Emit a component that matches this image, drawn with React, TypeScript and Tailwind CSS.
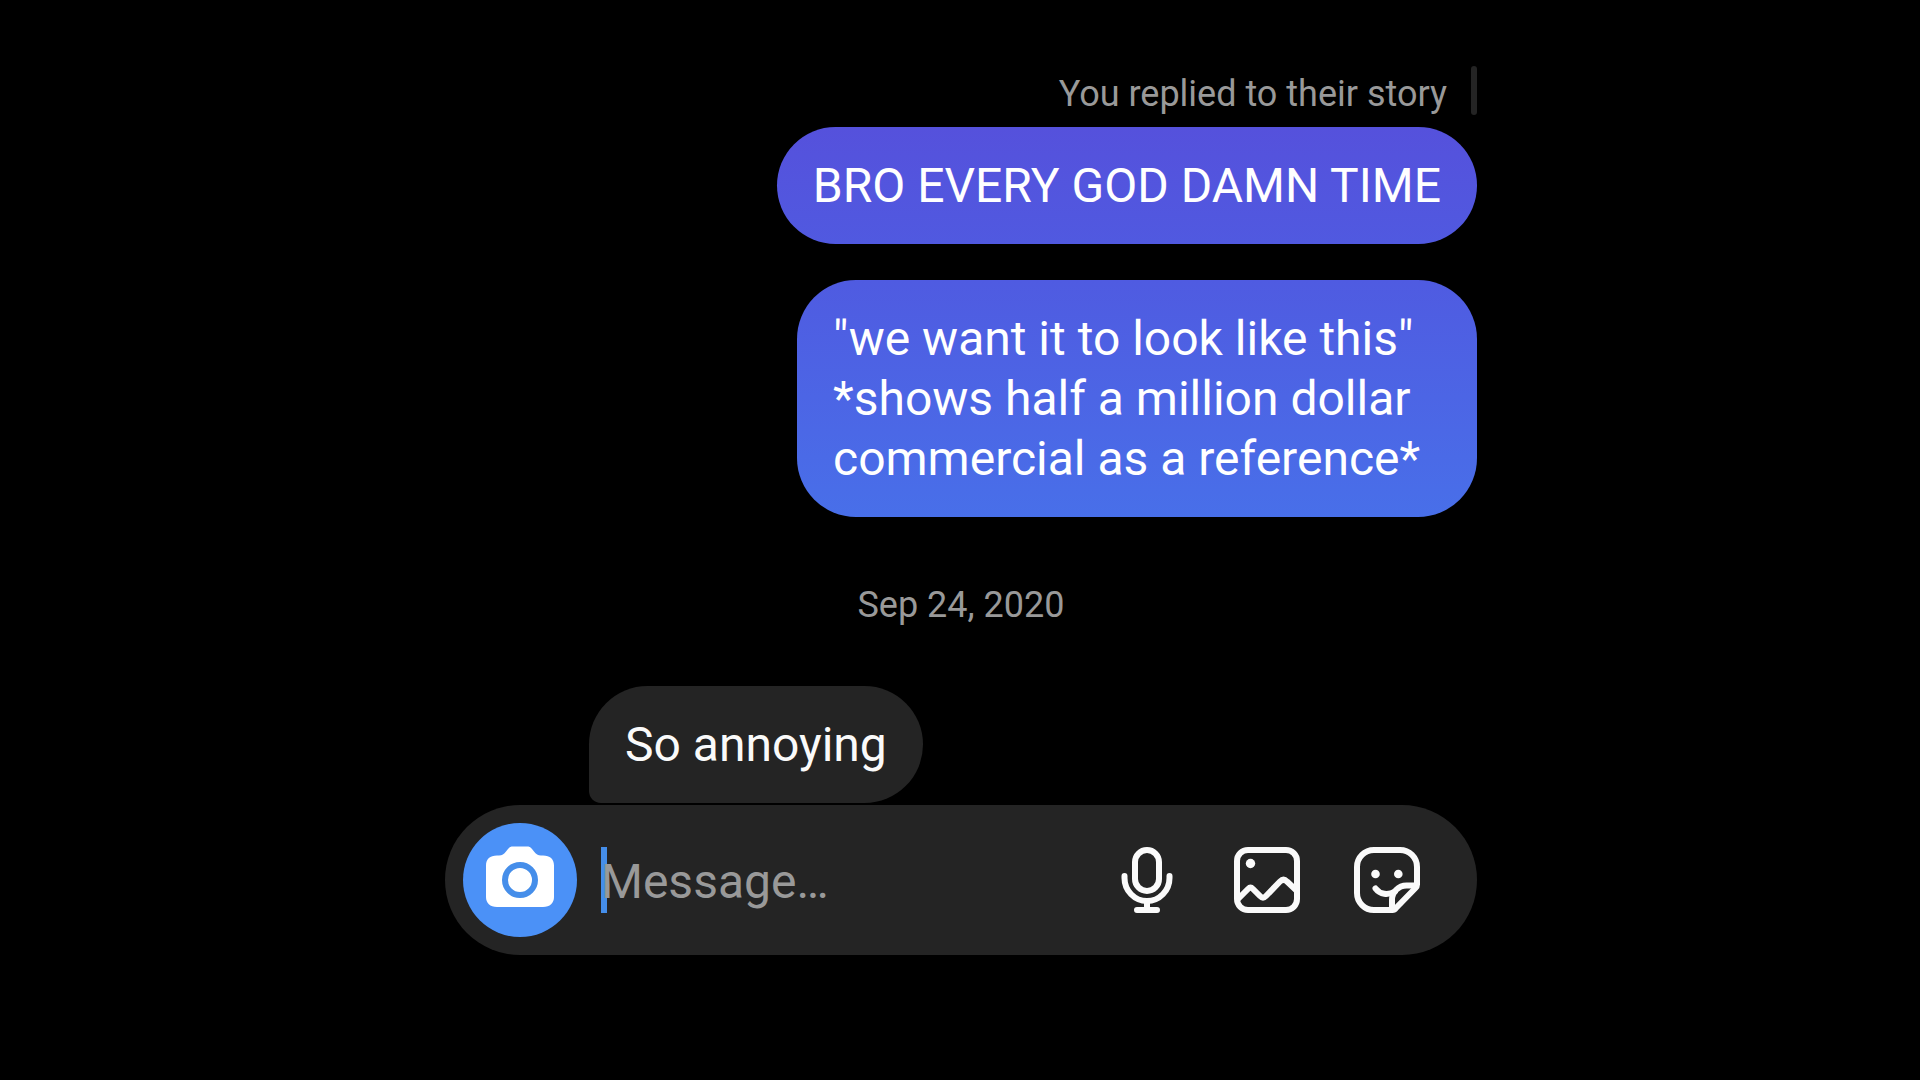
import React, { useState } from 'react'

function CameraIcon() {
    return (
        <svg viewBox="0 0 114 114" className="w-full h-full" aria-hidden="true">
            <path
                fill="#fff"
                d="M34 32.500H36C39 32.500 41 31 43 28.500L45 26C46.500 24 48 23.500 50 23.500H64C66 23.500 67.500 24 69 26L71 28.500C73 31 75 32.500 78 32.500H80C87 32.500 91 36 91 42.500V74C91 80 87 84 80 84H34C27 84 23 80 23 74V42.500C23 36 27 32.500 34 32.500Z"
            />
            <circle cx="57" cy="57" r="15" fill="#fff" stroke="#458eea" strokeWidth="6" />
        </svg>
    )
}

function MicIcon() {
    return (
        <svg viewBox="0 0 66 66" fill="none" stroke="#fafafa" strokeWidth="6" strokeLinecap="round" className="w-full h-full" aria-hidden="true">
            <rect x="21" y="3" width="24" height="41" rx="12" />
            <path d="M10.500 29v2a22.500 23 0 0 0 45 0v-2M33 54v8M23 63h20" />
        </svg>
    )
}

function PhotoIcon() {
    return (
        <svg viewBox="0 0 66 66" fill="none" stroke="#fafafa" strokeWidth="6" strokeLinejoin="round" className="w-full h-full" aria-hidden="true">
            <rect x="3" y="3" width="60" height="60" rx="11" />
            <circle cx="16.500" cy="16.500" r="4.700" fill="#fafafa" stroke="none" />
            <path d="M4 52L14 42Q16.500 39.500 19 42L26 49Q29 52 32 49L46 34.500Q49.500 31 53 34.500L62 43" />
        </svg>
    )
}

function StickerIcon() {
    return (
        <svg viewBox="0 0 66 66" fill="none" stroke="#fafafa" strokeWidth="6" strokeLinejoin="round" strokeLinecap="round" className="w-full h-full" aria-hidden="true">
            <path d="M38.500 63H20A17 17 0 0 1 3 46V20A17 17 0 0 1 20 3H46A17 17 0 0 1 63 20V37.500Q63 39.500 61.500 41L42 61Q40.500 63 38.500 63Z" />
            <path d="M38 61V53A14.500 14.500 0 0 1 52.500 38.500H61" />
            <path d="M21.500 41.500C26 47.500 34 48.500 41 44.500" />
            <circle cx="21.500" cy="27" r="4.300" fill="#fafafa" stroke="none" />
            <circle cx="44.300" cy="27" r="4.300" fill="#fafafa" stroke="none" />
        </svg>
    )
}

const actions = [
    { label: 'Record voice message', Icon: MicIcon },
    { label: 'Send a photo', Icon: PhotoIcon },
    { label: 'Send a sticker', Icon: StickerIcon },
]

export default function App() {
    const [message, setMessage] = useState('')

    return (
        <div className="bg-black min-h-screen pt-[66px] pb-8 pl-0.5 font-[Roboto,sans-serif]">
            <main className="w-full max-w-[1032px] mx-auto flex flex-col">
                {/* Story reply label */}
                <div className="flex items-stretch justify-end gap-6">
                    <p className="pt-[7px] text-[36px] leading-[42px] text-[#999999]">You replied to their story</p>
                    <span className="w-1.5 rounded-full bg-[#242424]" />
                </div>

                {/* Sent messages */}
                <div className="mt-3 flex flex-col items-end gap-9 text-[48px] leading-[60px] text-white">
                    <p className="rounded-[59px] px-9 pt-[29px] pb-7 bg-linear-to-b from-[#5551dc] to-[#5059e0]">
                        BRO EVERY GOD DAMN TIME
                    </p>
                    <p className="max-w-[680px] rounded-[59px] px-9 pt-[29px] pb-7 bg-linear-to-b from-[#4f5be1] to-[#486fe9]">
                        "we want it to look like this" *shows half a million dollar commercial as a reference*
                    </p>
                </div>

                <time dateTime="2020-09-24" className="pt-[67px] pb-[60px] text-center text-[36px] leading-[42px] text-[#999999]">
                    Sep 24, 2020
                </time>

                {/* Received message */}
                <p className="self-start ml-36 rounded-[59px] rounded-bl-xl px-9 pt-[29px] pb-7 bg-[#242424] text-[48px] leading-[60px] text-[#fafafa]">
                    So annoying
                </p>

                {/* Composer */}
                <form
                    onSubmit={(e) => e.preventDefault()}
                    className="mt-0.5 flex items-center rounded-full bg-[#242424] py-[18px] pl-[18px] pr-[57px]"
                >
                    <button type="button" aria-label="Open camera" className="size-[114px] shrink-0 rounded-full bg-[#4b91f7]">
                        <CameraIcon />
                    </button>
                    <div className="relative ml-6 flex-1 min-w-0">
                        {message === '' && <span className="absolute left-0 inset-y-0 w-1.5 bg-[#458eea]" />}
                        <input
                            type="text"
                            aria-label="Message"
                            placeholder="Message…"
                            value={message}
                            onChange={(e) => setMessage(e.target.value)}
                            className="relative block w-full h-[66px] pt-1 bg-transparent text-[48px] text-[#fafafa] placeholder:text-[#999999] outline-none"
                        />
                    </div>
                    <div className="flex shrink-0 gap-[54px]">
                        {actions.map(({ label, Icon }) => (
                            <button key={label} type="button" aria-label={label} className="size-[66px]">
                                <Icon />
                            </button>
                        ))}
                    </div>
                </form>
            </main>
        </div>
    )
}
